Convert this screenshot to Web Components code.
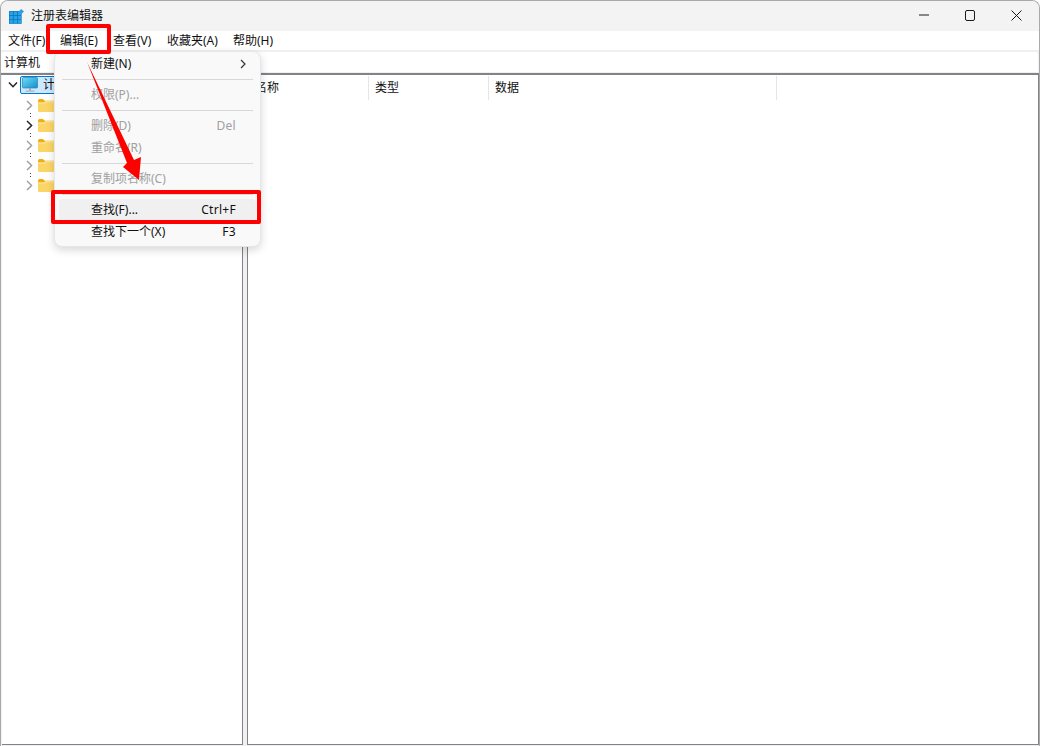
<!DOCTYPE html>
<html lang="zh"><head><meta charset="utf-8"><title>注册表编辑器</title>
<style>
html,body{margin:0;padding:0;height:100%;background:#fff}
body{font:12px/16px "Noto Sans","Noto Sans CJK SC",sans-serif;color:#111;overflow:hidden}
</style></head><body>
<reg-window>
  <reg-titlebar slot="title">注册表编辑器</reg-titlebar>
  <reg-menubar slot="menubar">
    <span style="width:52px">文件(F)</span><span style="width:53px">编辑(E)</span><span style="width:54px">查看(V)</span><span style="width:66px">收藏夹(A)</span><span>帮助(H)</span>
  </reg-menubar>
  <reg-address slot="address">计算机</reg-address>
  <reg-tree slot="tree"></reg-tree>
  <reg-list slot="list"></reg-list>
  <reg-menu slot="overlay">
    <reg-item label="新建(N)" arrow></reg-item>
    <reg-sep></reg-sep>
    <reg-item label="权限(P)..." disabled></reg-item>
    <reg-sep></reg-sep>
    <reg-item label="删除(D)" hint="Del" disabled></reg-item>
    <reg-item label="重命名(R)" disabled></reg-item>
    <reg-sep></reg-sep>
    <reg-item label="复制项名称(C)" disabled></reg-item>
    <reg-sep></reg-sep>
    <reg-item label="查找(F)..." hint="Ctrl+F" active></reg-item>
    <reg-item label="查找下一个(X)" hint="F3"></reg-item>
  </reg-menu>
  <reg-annotations slot="overlay"></reg-annotations>
</reg-window>
<script>
function def(name, html){
  customElements.define(name, class extends HTMLElement{
    constructor(){super();this.attachShadow({mode:'open'}).innerHTML = typeof html==='function'?html(this):html;}
  });
}
def('reg-window',`<style>
:host{display:block;position:relative;width:1040px;height:746px;box-sizing:border-box;background:#f0f0f0;overflow:hidden;
border:1px solid #a9a9a9;border-bottom:0;border-radius:8px 8px 0 0}
.col{display:flex;flex-direction:column;height:100%}
.panes{flex:1;display:flex;min-height:0;border-top:2px solid #82828a;padding:0 0 1px 1px;background:#f0f0f0}
.l{width:240px;flex:none;background:#fff;border-right:1px solid #82828a;border-bottom:1px solid #82828a;overflow:hidden}
.r{flex:1;margin-left:4px;background:#fff;border-left:1px solid #82828a;border-right:1px solid #82828a;border-bottom:1px solid #82828a;min-width:0}
</style><div class="col"><slot name="title"></slot><slot name="menubar"></slot><slot name="address"></slot>
<div class="panes"><div class="l"><slot name="tree"></slot></div><div class="r"><slot name="list"></slot></div></div></div><slot name="overlay"></slot>`);
def('reg-titlebar',`<style>
:host{display:flex;align-items:center;height:30px;flex:none;background:#f3f3f3;color:#111}
svg{display:block}
.ic{margin:0 7px 0 8px;flex:none}
.t{flex:1;font-size:12px}
.b{width:46px;height:28px;margin-bottom:2px;display:flex;align-items:center;justify-content:center}
</style>
<svg class="ic" width="15" height="15" viewBox="0 0 15 15">
<rect x="0" y="2" width="12.6" height="12.8" fill="#0f6fb5"/>
<g fill="#25a4ea"><rect x=".5" y="2.5" width="3.4" height="3.6"/><rect x="4.6" y="2.5" width="3.4" height="3.6"/><rect x="8.7" y="2.5" width="3.4" height="3.6"/>
<rect x=".5" y="6.8" width="3.4" height="3.6"/><rect x="4.6" y="6.8" width="3.4" height="3.6"/><rect x="8.7" y="6.8" width="3.4" height="3.6"/>
<rect x=".5" y="11" width="3.4" height="3.4"/><rect x="4.6" y="11" width="3.4" height="3.4"/><rect x="8.7" y="11" width="3.4" height="3.4"/></g>
<path d="M12.2 0 15 2.6 12.2 5.2 9.6 2.6Z" fill="#2f9fe0"/></svg>
<span class="t"><slot></slot></span>
<span class="b"><svg width="10" height="10" viewBox="0 0 10 10"><path d="M0 5h10" stroke="#1a1a1a" fill="none"/></svg></span>
<span class="b"><svg width="10" height="11" viewBox="0 0 10 11"><rect x=".5" y=".5" width="9" height="10" rx="1.5" stroke="#1a1a1a" fill="none"/></svg></span>
<span class="b"><svg width="11" height="11" viewBox="0 0 11 11"><path d="M.5.5l10 10M10.5.5l-10 10" stroke="#1a1a1a" fill="none"/></svg></span>`);
def('reg-menubar',`<style>
:host{display:flex;align-items:center;height:19px;flex:none;background:#fff;padding:1px 0 0 7px;box-sizing:border-box}
::slotted(span){display:block;white-space:nowrap}
</style><slot></slot>`);
def('reg-address',`<style>
:host{display:block;flex:none;background:#f0f0f0;padding:2px 1px 1px 0}
div{background:#fff;height:20px;line-height:21px;padding-left:3px;border-radius:2px 2px 0 0}
</style><div><slot></slot></div>`);
const chev=(c)=>`<svg width="8" height="11" viewBox="0 0 8 11"><path d="M1 1 5.6 5.5 1 10" fill="none" stroke="${c}" stroke-width="1.5"/></svg>`;
const folder=`<svg class="f" width="16" height="13" viewBox="0 0 16 13"><path d="M0 1.5A1.5 1.5 0 0 1 1.5 0h3.4l1.8 1.8H16V4H0Z" fill="#f2ad16"/><path d="M0 3.4h6l1.6-1.2H16v9.8a1 1 0 0 1-1 1H1a1 1 0 0 1-1-1Z" fill="#fbd667"/><path d="M0 3.4h6l1.6-1.2H16v1H8L6.2 4.4H0Z" fill="#fdeaa6"/></svg>`;
def('reg-tree',`<style>
:host{display:block;position:relative}
.row{display:flex;align-items:center;height:20px;position:relative}
.root{padding-left:6px}
.sel{display:flex;align-items:center;height:16px;margin-left:2px;padding-left:1px;width:200px;background:#cce8ff;border:1px solid #0078d4;border-radius:2px;flex:none}
.child{padding-left:24px}
.f{margin-left:4px}
.row svg{flex:none;display:block}
.dots{position:absolute;left:28px;top:-2px;width:1px;height:5px;background:repeating-linear-gradient(#444 0 1px,transparent 1px 3px)}
.t{margin-left:5px}
</style>
<div class="row root"><svg width="10" height="8" viewBox="0 0 10 8"><path d="M1 1.5 5 5.7 9 1.5" fill="none" stroke="#222" stroke-width="1.5"/></svg>
<div class="sel"><svg width="16" height="16" viewBox="0 0 16 16"><defs><linearGradient id="sc" x1="0" y1="0" x2="1" y2="1"><stop offset="0" stop-color="#6fdcf2"/><stop offset="1" stop-color="#0f8fd0"/></linearGradient></defs><rect x=".5" y=".5" width="15" height="10.5" rx="1" fill="url(#sc)" stroke="#3b7f9c" stroke-width=".7"/><path d="M7 11h2v2.5H7Z" fill="#9aa8b0"/><path d="M3.5 13.5h9v1.2h-9Z" fill="#a8b4ba"/></svg><span class="t">计算机</span></div></div>
${['#a0a0a0','#222','#a0a0a0','#a0a0a0','#a0a0a0'].map((c,i)=>`<div class="row child">${chev(c)}${folder}${i?'<i class="dots"></i>':''}</div>`).join('')}`);
def('reg-list',`<style>
:host{display:flex;height:25px;padding-top:1px;box-sizing:border-box;background:#fff}
div{box-sizing:border-box;height:24px;line-height:24px;padding-left:6px;border-right:1px solid #e5e5e5}
</style><div style="width:121px;padding-left:7px">名称</div><div style="width:120px">类型</div><div style="width:288px">数据</div>`);
def('reg-menu',`<style>
:host{position:absolute;left:53px;top:50px;width:207px;box-sizing:border-box;padding:1px 4px 3px;background:#f9f9f9;border:1px solid #e6e6e6;border-radius:8px;box-shadow:0 3px 8px rgba(0,0,0,.16);display:block}
</style><slot></slot>`);
def('reg-sep',`<style>:host{display:block;height:9px;position:relative}
i{position:absolute;left:3px;right:3px;top:4px;height:1px;background:#d8d8d8}</style><i></i>`);
def('reg-item',h=>`<style>
:host{display:flex;align-items:center;height:22px;border-radius:4px;padding:0 20px 0 32px;color:#111;justify-content:space-between;white-space:nowrap;position:relative}
:host([disabled]){color:#a0a0a0}
:host([active]){background:#f0f0f0}
svg{display:block;position:absolute;right:10px;top:6px}
.h{letter-spacing:.3px}
</style><span>${h.getAttribute('label')||''}</span><span class="h">${h.getAttribute('hint')||''}</span>${h.hasAttribute('arrow')?'<svg width="6" height="10" viewBox="0 0 6 10"><path d="M1 1 5 5 1 9" fill="none" stroke="#333" stroke-width="1.2"/></svg>':''}`);
def('reg-annotations',`<style>
:host{position:absolute;left:-1px;top:-1px;width:1040px;height:746px;display:block;pointer-events:none}
svg{position:absolute;left:0;top:0}
</style><svg width="1040" height="746" viewBox="0 0 1040 746">
<rect x="48" y="26" width="61" height="26" fill="none" stroke="#f00" stroke-width="4" stroke-linejoin="round"/>
<rect x="53" y="192" width="206" height="30" fill="none" stroke="#f00" stroke-width="4" stroke-linejoin="round"/>
<path d="M87 62 134 160 141 157 139 180 123 167 127 163Z" fill="#f00"/>
</svg>`);
</script>
</body></html>
